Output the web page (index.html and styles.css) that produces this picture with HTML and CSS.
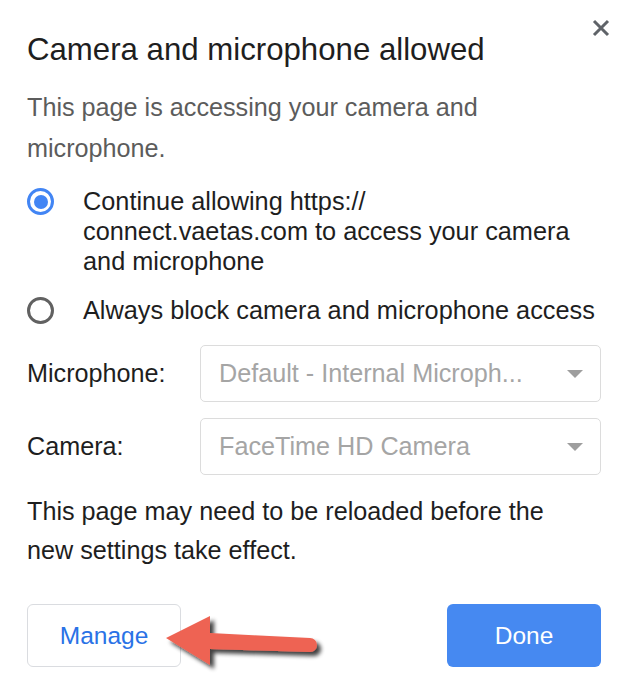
FILE: index.html
```html
<!DOCTYPE html>
<html>
<head>
<meta charset="utf-8">
<link rel="stylesheet" href="styles.css">
</head>
<body>
<div class="dialog">
  <button class="close" aria-label="Close">
    <svg width="18" height="18" viewBox="0 0 18 18"><path d="M2 2 L16 16 M16 2 L2 16" stroke="#5f6368" stroke-width="3" stroke-linecap="butt"/></svg>
  </button>
  <h1 class="title">Camera and microphone allowed</h1>
  <p class="intro">This page is accessing your camera and microphone.</p>
  <div class="options">
    <label class="option">
      <span class="radio checked"></span>
      <span class="option-text">Continue allowing https://<br>connect.vaetas.com to access your camera and microphone</span>
    </label>
    <label class="option">
      <span class="radio"></span>
      <span class="option-text">Always block camera and microphone access</span>
    </label>
  </div>
  <div class="devices">
    <div class="device-row">
      <span class="device-label">Microphone:</span>
      <div class="select"><span class="select-text">Default - Internal Microph...</span><span class="caret"></span></div>
    </div>
    <div class="device-row">
      <span class="device-label">Camera:</span>
      <div class="select"><span class="select-text">FaceTime HD Camera</span><span class="caret"></span></div>
    </div>
  </div>
  <p class="note">This page may need to be reloaded before the new settings take effect.</p>
  <div class="actions">
    <button class="btn btn-manage">Manage</button>
    <button class="btn btn-done">Done</button>
  </div>
  <svg class="arrow" width="180" height="70" viewBox="0 0 180 70">
    <defs>
      <filter id="sh" x="-20%" y="-30%" width="150%" height="170%">
        <feGaussianBlur in="SourceAlpha" stdDeviation="2"/>
        <feOffset dx="4" dy="4" result="b"/>
        <feComponentTransfer><feFuncA type="linear" slope="0.75"/></feComponentTransfer>
        <feMerge><feMergeNode/><feMergeNode in="SourceGraphic"/></feMerge>
      </filter>
    </defs>
    <g filter="url(#sh)">
      <path d="M6 30 L50 8 L50 25 L150 30 A7 7 0 0 1 150 44 L50 41 L50 57 Z" fill="#ee6353"/>
    </g>
  </svg>
</div>
</body>
</html>
```
FILE: styles.css
```css
* { box-sizing: border-box; }
html, body { margin: 0; padding: 0; background: #ffffff; }
body {
  font-family: "Liberation Sans", Arial, Helvetica, sans-serif;
  color: #202124;
}
.dialog {
  position: relative;
  width: 624px;
  height: 688px;
  padding: 30px 23px 0 27px;
}
.close {
  position: absolute;
  top: 19px;
  right: 14px;
  width: 18px;
  height: 18px;
  padding: 0;
  border: 0;
  background: none;
  display: flex;
}
.title {
  margin: 0;
  font-size: 31.2px;
  font-weight: normal;
  line-height: 40px;
  color: #1e1e1e;
}
.intro {
  margin: 17px 0 0;
  font-size: 25.2px;
  line-height: 41px;
  color: #5c5c5c;
  width: 470px;
}
.options {
  margin-top: 17px;
  display: flex;
  flex-direction: column;
  gap: 19px;
}
.option {
  display: flex;
  align-items: flex-start;
  gap: 29px;
}
.radio {
  flex: none;
  width: 27px;
  height: 27px;
  margin-top: 2px;
  border-radius: 50%;
  border: 3px solid #616161;
  display: flex;
  align-items: center;
  justify-content: center;
}
.radio.checked { border-color: #4285f4; }
.radio.checked::after {
  content: "";
  width: 14px;
  height: 14px;
  border-radius: 50%;
  background: #4285f4;
}
.option-text {
  font-size: 25.3px;
  line-height: 30px;
  color: #1e1e1e;
}
.devices {
  margin-top: 20px;
  display: flex;
  flex-direction: column;
  gap: 16px;
}
.device-row {
  display: flex;
  align-items: center;
}
.device-label {
  width: 173px;
  flex: none;
  font-size: 25.2px;
  color: #1e1e1e;
}
.select {
  flex: 1;
  height: 57px;
  border: 1.5px solid #dcdcdc;
  border-radius: 5px;
  display: flex;
  align-items: center;
  justify-content: space-between;
  padding: 0 17px 0 18px;
}
.select-text {
  font-size: 25.2px;
  color: #a5a5a5;
}
.caret {
  width: 0;
  height: 0;
  border-left: 8px solid transparent;
  border-right: 8px solid transparent;
  border-top: 8px solid #9e9e9e;
}
.note {
  margin: 17px 0 0;
  font-size: 25.2px;
  line-height: 39px;
  color: #1e1e1e;
  width: 540px;
}
.actions {
  margin-top: 34px;
  display: flex;
  justify-content: space-between;
}
.btn {
  width: 154px;
  height: 63px;
  border-radius: 6px;
  font-family: "Liberation Sans", Arial, Helvetica, sans-serif;
  font-size: 24.5px;
  padding: 0;
}
.btn-manage {
  background: #ffffff;
  border: 1.5px solid #dadce0;
  color: #2a72e6;
}
.btn-done {
  background: #4689f1;
  border: 0;
  color: #ffffff;
}
.arrow {
  position: absolute;
  left: 160px;
  top: 608px;
}
```
